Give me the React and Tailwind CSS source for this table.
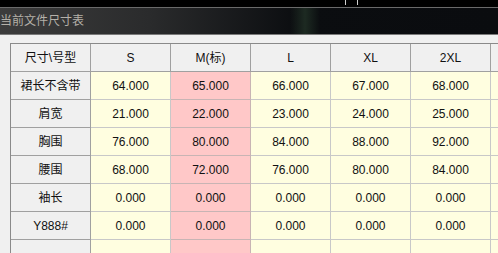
import React from "react";

const cols = ["S", "M(标)", "L", "XL", "2XL"];

const rows = [
  { name: "裙长不含带", vals: ["64.000", "65.000", "66.000", "67.000", "68.000"] },
  { name: "肩宽", vals: ["21.000", "22.000", "23.000", "24.000", "25.000"] },
  { name: "胸围", vals: ["76.000", "80.000", "84.000", "88.000", "92.000"] },
  { name: "腰围", vals: ["68.000", "72.000", "76.000", "80.000", "84.000"] },
  { name: "袖长", vals: ["0.000", "0.000", "0.000", "0.000", "0.000"] },
  { name: "Y888#", vals: ["0.000", "0.000", "0.000", "0.000", "0.000"] },
  { name: "", vals: ["", "", "", "", ""] },
];

const HeadCell = ({ children }) => (
  <div className="w-[80px] h-[28px] shrink-0 flex items-center justify-center bg-[#f0f0f0] border-r border-b border-[#a0a0a0]">
    {children}
  </div>
);

const DataCell = ({ children, pink }) => (
  <div
    className={`w-[80px] h-[28px] shrink-0 flex items-center justify-center border-r border-b ${
      pink ? "bg-[#ffc8c8] border-[#c8b4b4]" : "bg-[#fffee0] border-[#c8c8c8]"
    }`}
  >
    {children}
  </div>
);

export default function App() {
  return (
    <div
      className="w-[498px] h-[253px] overflow-hidden bg-[#f0f0f0] text-[12px] text-[#111]"
      style={{ fontFamily: '"Liberation Sans", "Noto Sans CJK SC", sans-serif' }}
    >
      {/* top strip */}
      <div className="relative h-[7px] bg-black">
        <div className="absolute left-[345px] top-0 w-px h-[5px] bg-[#d0d0d0]" />
        <div className="absolute left-[357px] top-0 w-px h-[5px] bg-[#d0d0d0]" />
      </div>
      <div className="h-px bg-[#6a6a6a]" />
      {/* title bar */}
      <div className="relative h-[26px] bg-[linear-gradient(90deg,#3c3c3c_0%,#2a2b2c_30%,#0b0d10_60%,#0a0c0f_100%)] flex items-center">
        <div className="absolute left-[290px] top-0 w-[30px] h-full bg-[linear-gradient(90deg,transparent,#1d2a22,transparent)]" />
        <span className="ml-0 text-[12px] text-[#b4b0a8]">当前文件尺寸表</span>
      </div>
      <div className="h-px bg-[#7a7a7a]" />
      {/* table area */}
      <div className="pt-[8px] pl-[10px]">
        <div className="flex flex-col border-l border-t border-[#8a8a8a] w-max">
          <div className="flex">
            <HeadCell>尺寸\号型</HeadCell>
            {cols.map((c) => (
              <HeadCell key={c}>{c}</HeadCell>
            ))}
            <div className="w-[20px] h-[28px] bg-[#f0f0f0] border-b border-[#a0a0a0]" />
          </div>
          {rows.map((r, i) => (
            <div className="flex" key={i}>
              <HeadCell>{r.name}</HeadCell>
              {r.vals.map((v, j) => (
                <DataCell key={j} pink={j === 1}>
                  {v}
                </DataCell>
              ))}
              <div className="w-[20px] h-[28px] bg-[#fffee0] border-b border-[#c8c8c8]" />
            </div>
          ))}
        </div>
      </div>
    </div>
  );
}
